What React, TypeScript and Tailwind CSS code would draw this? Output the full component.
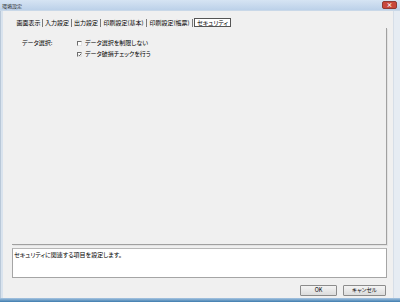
import React from "react";

const tabs = [
  { label: "画面表示", w: "w-[27px]" },
  { label: "入力設定", w: "w-[28px]" },
  { label: "出力設定", w: "w-[28px]" },
  { label: "印刷設定(基本)", w: "w-[45px]" },
  { label: "印刷設定(帳票)", w: "w-[45px]" },
];

function Check({ checked }: { checked?: boolean }) {
  return (
    <span className="relative w-[5px] h-[5px] bg-white border-t border-l border-t-[#6d6d6d] border-l-[#6d6d6d] border-r border-b border-r-[#e3e3e3] border-b-[#e3e3e3] shrink-0">
      {checked && (
        <svg viewBox="0 0 5 5" className="absolute left-0 top-0 w-[4px] h-[4px]">
          <path d="M0.5 2.2 L1.8 3.5 L4 0.8" stroke="#222" strokeWidth="0.9" fill="none" />
        </svg>
      )}
    </span>
  );
}

export default function App() {
  return (
    <div className="w-[400px] h-[302px] flex flex-col bg-[#f0f0f0] overflow-hidden text-black [font-family:'Noto_Sans_CJK_JP',sans-serif] [font-feature-settings:'palt']">
      {/* title bar */}
      <div className="h-[11px] shrink-0 flex items-center justify-between bg-[linear-gradient(#d6e4f3,#bcd1e9)] pl-[2px] pr-[3px] border-b border-[#c9d8e8]">
        <span className="text-[5px] leading-none text-[#222]">環境設定</span>
        <div className="w-[15px] h-[8px] rounded-[2px] bg-[#c9483c] border border-[#8f3b33] flex items-center justify-center">
          <span className="text-[6px] leading-none text-white font-bold">×</span>
        </div>
      </div>

      <div className="flex-1 flex min-h-0">
        <div className="w-[3px] bg-[#d9e3ee] border-l border-[#b9c8d8]" />

        <div className="flex-1 flex flex-col pl-[9px] pr-[6px] min-w-0">
          {/* tabs */}
          <div className="h-[17px] shrink-0 flex items-end pb-[1px] pl-[3px] text-[6px] leading-none whitespace-nowrap">
            {tabs.map((t) => (
              <React.Fragment key={t.label}>
                <span className={`${t.w} h-[9px] flex items-center justify-center`}>{t.label}</span>
                <span className="w-px h-[8px] bg-[#7a7a7a]" />
              </React.Fragment>
            ))}
            <span className="w-[37px] h-[9px] ml-px flex items-center justify-center border border-[#555] bg-white">
              セキュリティ
            </span>
          </div>

          {/* panel */}
          <div className="flex-1 min-h-0 border-r border-b border-[#a0a0a0] shadow-[1px_1px_0_#e3e3e3] pt-[11px] pl-[10px] text-[6px] leading-[8px]">
            <div className="flex">
              <span className="w-[55px]">データ選択:</span>
              <div className="flex flex-col gap-[3px]">
                <label className="flex items-center gap-[3px]">
                  <Check />
                  <span>データ選択を制限しない</span>
                </label>
                <label className="flex items-center gap-[3px]">
                  <Check checked />
                  <span>データ破損チェックを行う</span>
                </label>
              </div>
            </div>
          </div>

          {/* description */}
          <div className="mt-[3px] h-[30px] shrink-0 bg-white border border-[#a5a5a5] border-t-[#b8b8b8] px-[1px] pt-[2px] text-[6px] leading-[8px]">
            セキュリティに関連する項目を設定します。
          </div>

          {/* buttons */}
          <div className="h-[20px] shrink-0 flex items-start justify-end gap-[6px] pt-[7px] pr-px">
            <button className="w-[37px] h-[11px] rounded-[1px] border border-[#8c8c8c] bg-[linear-gradient(#f4f4f4,#dcdcdc)] text-[5.5px] leading-none">
              OK
            </button>
            <button className="w-[43px] h-[11px] rounded-[1px] border border-[#8c8c8c] bg-[linear-gradient(#f4f4f4,#dcdcdc)] text-[5.5px] leading-none">
              キャンセル
            </button>
          </div>
        </div>

        <div className="w-[7px] bg-[#e6ecf3] border-l border-[#d6dee8]" />
      </div>

      <div className="h-[4px] shrink-0 bg-[linear-gradient(#a9c6e2,#3d7cae)]" />
    </div>
  );
}
